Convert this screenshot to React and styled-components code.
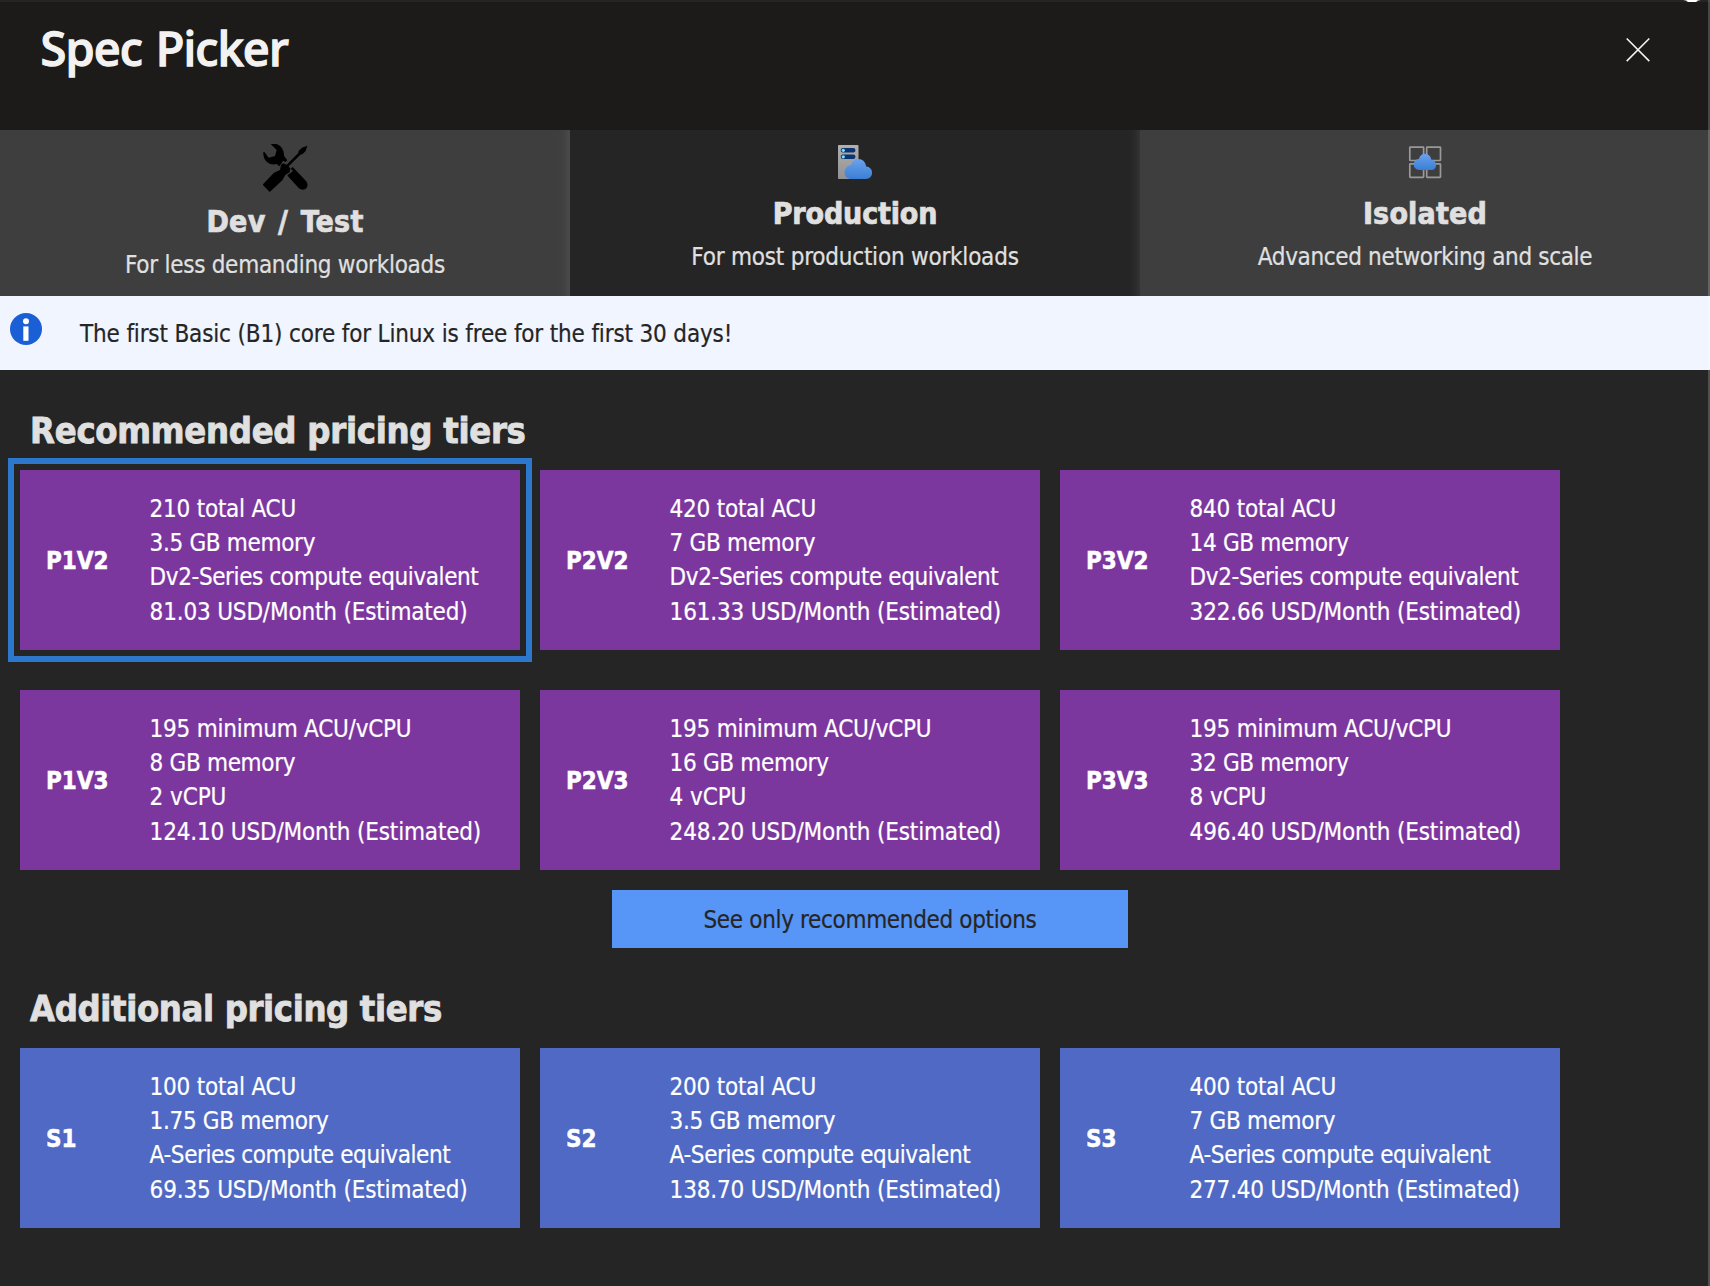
import React from "react";
import styled, { createGlobalStyle } from "styled-components";

const GlobalStyle = createGlobalStyle`
  * { box-sizing: border-box; }
  body {
    margin: 0;
    background: #252525;
    font-family: "DejaVu Sans Condensed", "DejaVu Sans", sans-serif;
    -webkit-text-stroke: 0.2px currentColor;
    overflow: hidden;
  }
  h1, h2, h3, p { margin: 0; }
  button { font: inherit; }
`;

const Blade = styled.div`
  position: relative;
  width: 1710px;
  height: 1286px;
  overflow: hidden;
  background: #252525;

  &::after {
    content: "";
    position: absolute;
    top: 0;
    right: 0;
    width: 2px;
    height: 100%;
    background: rgba(255, 255, 255, 0.2);
  }
`;

const Glint = styled.svg`
  position: absolute;
  top: 0;
  left: 1682px;
`;

const Header = styled.header`
  display: flex;
  justify-content: space-between;
  align-items: flex-start;
  height: 130px;
  padding: 16px 59px 0 40.5px;
  background: #1c1b19;
  border-top: 2px solid #252525;
`;

const BladeTitle = styled.h1`
  font-family: "Noto Sans", "Open Sans", sans-serif;
  font-size: 47px;
  font-weight: 500;
  line-height: 60px;
  letter-spacing: -0.9px;
  word-spacing: 2.5px;
  color: #f3f2f1;
  -webkit-text-stroke: 1.3px #f3f2f1;
`;

const CloseButton = styled.button`
  display: flex;
  margin-top: 19px;
  padding: 0;
  border: 0;
  background: none;
`;

const Tabs = styled.nav`
  display: grid;
  grid-template-columns: repeat(3, 1fr);
  height: 166px;
`;

const Tab = styled.div`
  display: flex;
  flex-direction: column;
  align-items: center;
  padding-top: 14px;
  color: #e0e0e0;
  background: ${(p) => (p.$active ? "#252525" : "#3e3e3e")};

  &:not(:last-child) {
    box-shadow: inset -14px 0 14px -14px rgba(255, 255, 255, 0.14);
  }
`;

const TabIcon = styled.div`
  display: flex;
  align-items: flex-start;
  height: ${(p) => p.$height}px;
  margin-bottom: 12px;
`;

const TabTitle = styled.h3`
  font-size: 30px;
  line-height: 36px;
  letter-spacing: ${(p) => p.$tracking}px;
  word-spacing: 3px;
  -webkit-text-stroke: 0.7px currentColor;
  margin-bottom: 8px;
`;

const TabNote = styled.p`
  font-size: 24px;
  line-height: 34px;
  letter-spacing: ${(p) => p.$tracking}px;
`;

const Banner = styled.div`
  display: flex;
  align-items: center;
  gap: 38px;
  height: 74px;
  padding: 2px 0 0 10px;
  background: #f0f5ff;
  color: #252525;
  font-size: 24px;
  line-height: 34px;
  letter-spacing: -0.16px;
`;

const InfoIcon = styled.svg`
  margin-bottom: 10px;
`;

const Section = styled.section`
  display: flex;
  flex-direction: column;
  padding: 38.5px 0 0 20px;
`;

const SectionTitle = styled.h2`
  padding-left: 10px;
  margin-bottom: 17.5px;
  font-size: 36px;
  line-height: 44px;
  letter-spacing: ${(p) => p.$tracking}px;
  color: #e0e0e0;
  -webkit-text-stroke: 0.8px currentColor;
`;

const TierGrid = styled.div`
  display: grid;
  grid-template-columns: repeat(3, 500px);
  grid-auto-rows: 180px;
  gap: 40px 20px;
`;

const Tier = styled.div`
  display: grid;
  grid-template-columns: 103.6px 1fr;
  align-items: center;
  padding-left: 26px;
  color: #fff;
  background: ${(p) => (p.$standard ? "#4f69c4" : "#7c379f")};
  outline: ${(p) => (p.$selected ? "6px solid #2b78cd" : "none")};
  outline-offset: 6px;
`;

const TierName = styled.div`
  padding-top: 2px;
  font-size: 24px;
  font-weight: 700;
  -webkit-text-stroke: 0.5px currentColor;
`;

const TierSpecs = styled.div`
  display: flex;
  flex-direction: column;
`;

const Spec = styled.div`
  font-size: 24px;
  line-height: 34px;
  letter-spacing: ${(p) => p.$tracking}px;
  white-space: nowrap;

  &:last-child {
    padding-top: 1px;
  }
`;

const ToggleButton = styled.button`
  width: 516px;
  height: 58px;
  margin: 20px 0 0 592px;
  padding: 1px 0 0;
  border: 0;
  background: #5795f7;
  color: #252525;
  font-size: 24px;
  letter-spacing: -0.34px;
`;

const ToolsIcon = () => (
  <svg width="45" height="48" viewBox="489 57 135 144">
    <path d="M512 57C537 52 553 70 552 92L562 106L556 111L549 107L545 115L538 124L530 117C510 123 488 108 490 81L494 82L506 98L525 93L530 75Z" />
    <path d="M622 62L617 78L607 88L601 89L566 124L571 131L569 142L556 150L547 166L509 201L488 179L522 143L540 135L543 120L550 115L560 119L595 84L596 77L606 68Z" />
    <path d="M562 151L571 145L579 137L572 131L578 126L586 134L618 168C631 185 613 203 596 189L566 156Z" />
  </svg>
);

const ServerCloudIcon = () => (
  <svg width="36" height="36" viewBox="0 0 36 36">
    <defs>
      <linearGradient id="chassis" x1="0" y1="0" x2="0" y2="1">
        <stop offset="0" stopColor="#b0b0b0" />
        <stop offset="1" stopColor="#929292" />
      </linearGradient>
      <linearGradient id="cloudA" x1="0" y1="0" x2="0" y2="1">
        <stop offset="0" stopColor="#6ba1ec" />
        <stop offset="1" stopColor="#3a7fd5" />
      </linearGradient>
    </defs>
    <rect x="1" y="1" width="20.5" height="34" rx="0.8" fill="url(#chassis)" />
    <rect x="3.8" y="4" width="14.6" height="4.6" rx="2" fill="#0c3470" />
    <rect x="3.8" y="10.5" width="14.6" height="4.6" rx="2" fill="#0c3470" />
    <circle cx="6.3" cy="6.3" r="1.6" fill="#7be0f5" />
    <circle cx="6.3" cy="12.8" r="1.6" fill="#7be0f5" />
    <path d="M14.5 35C10.5 35 7.6 32.2 7.6 28.2C7.6 24.4 10.4 21.6 14 21C15 17.4 17.9 15.1 21.4 15.1C25.6 15.1 28.6 18.2 29.2 22.6C32.7 22.8 35.1 25.5 35.1 28.8C35.1 32.4 32.4 35 28.8 35Z" fill="url(#cloudA)" />
  </svg>
);

const IsolatedIcon = () => (
  <svg width="36" height="36" viewBox="0 0 36 36">
    <defs>
      <linearGradient id="cloudB" x1="0" y1="0" x2="0" y2="1">
        <stop offset="0" stopColor="#6ba1ec" />
        <stop offset="1" stopColor="#3a7fd5" />
      </linearGradient>
    </defs>
    <g fill="none" stroke="#999" strokeWidth="1.7">
      <rect x="2.8" y="3.1" width="13.8" height="13.4" rx="0.6" />
      <rect x="19.7" y="3.1" width="13.8" height="13.4" rx="0.6" />
      <rect x="2.8" y="19.9" width="13.8" height="13.4" rx="0.6" />
      <rect x="19.7" y="19.9" width="13.8" height="13.4" rx="0.6" />
    </g>
    <path d="M12.4 26C9.1 26 6.7 23.7 6.7 20.6C6.7 17.4 9 15.2 11.8 14.9C12.8 11.6 15.2 9.8 18 9.8C21.4 9.8 23.8 12.3 24.3 15.8C27.1 16 29.1 18.1 29.1 20.9C29.1 23.9 27 26 24 26Z" fill="url(#cloudB)" />
  </svg>
);

const ACU = -0.24;
const MEM = -0.33;
const SERIES = -0.4;
const PRICE = -0.17;

const premium = [
  ["P1V2", ["210 total ACU", ACU], ["3.5 GB memory", MEM], ["Dv2-Series compute equivalent", SERIES], ["81.03 USD/Month (Estimated)", PRICE]],
  ["P2V2", ["420 total ACU", ACU], ["7 GB memory", MEM], ["Dv2-Series compute equivalent", SERIES], ["161.33 USD/Month (Estimated)", PRICE]],
  ["P3V2", ["840 total ACU", ACU], ["14 GB memory", MEM], ["Dv2-Series compute equivalent", SERIES], ["322.66 USD/Month (Estimated)", PRICE]],
  ["P1V3", ["195 minimum ACU/vCPU", ACU], ["8 GB memory", MEM], ["2 vCPU", -0.1], ["124.10 USD/Month (Estimated)", PRICE]],
  ["P2V3", ["195 minimum ACU/vCPU", ACU], ["16 GB memory", MEM], ["4 vCPU", -0.1], ["248.20 USD/Month (Estimated)", PRICE]],
  ["P3V3", ["195 minimum ACU/vCPU", ACU], ["32 GB memory", MEM], ["8 vCPU", -0.1], ["496.40 USD/Month (Estimated)", PRICE]],
];

const standard = [
  ["S1", ["100 total ACU", ACU], ["1.75 GB memory", MEM], ["A-Series compute equivalent", SERIES], ["69.35 USD/Month (Estimated)", PRICE]],
  ["S2", ["200 total ACU", ACU], ["3.5 GB memory", MEM], ["A-Series compute equivalent", SERIES], ["138.70 USD/Month (Estimated)", PRICE]],
  ["S3", ["400 total ACU", ACU], ["7 GB memory", MEM], ["A-Series compute equivalent", SERIES], ["277.40 USD/Month (Estimated)", -0.22]],
];

const Tiers = ({ tiers, isStandard, selected }) => (
  <TierGrid>
    {tiers.map(([name, ...specs]) => (
      <Tier key={name} $standard={isStandard} $selected={name === selected}>
        <TierName>{name}</TierName>
        <TierSpecs>
          {specs.map(([text, tracking]) => (
            <Spec key={text} $tracking={tracking}>{text}</Spec>
          ))}
        </TierSpecs>
      </Tier>
    ))}
  </TierGrid>
);

export default function App() {
  return (
    <>
      <GlobalStyle />
      <Blade>
        <Header>
          <BladeTitle>Spec Picker</BladeTitle>
          <CloseButton aria-label="Close">
            <svg width="26" height="26" viewBox="0 0 26 26">
              <path d="M1.7 1.5L24.3 24.1M24.3 1.5L1.7 24.1" stroke="#f3f2f1" strokeWidth="1.6" />
            </svg>
          </CloseButton>
        </Header>
        <Tabs>
          <Tab>
            <TabIcon $height={48}><ToolsIcon /></TabIcon>
            <TabTitle $tracking={0.25}>Dev / Test</TabTitle>
            <TabNote $tracking={-0.28}>For less demanding workloads</TabNote>
          </Tab>
          <Tab $active>
            <TabIcon $height={40}><ServerCloudIcon /></TabIcon>
            <TabTitle $tracking={-0.15}>Production</TabTitle>
            <TabNote $tracking={-0.22}>For most production workloads</TabNote>
          </Tab>
          <Tab>
            <TabIcon $height={40}><IsolatedIcon /></TabIcon>
            <TabTitle $tracking={0.2}>Isolated</TabTitle>
            <TabNote $tracking={-0.35}>Advanced networking and scale</TabNote>
          </Tab>
        </Tabs>
        <Banner>
          <InfoIcon width="32" height="32" viewBox="0 0 32 32">
            <circle cx="16" cy="16" r="16" fill="#1a5fd6" />
            <circle cx="16" cy="8.2" r="3" fill="#fff" />
            <rect x="13.3" y="13.4" width="5.2" height="14.4" fill="#fff" />
          </InfoIcon>
          <span>The first Basic (B1) core for Linux is free for the first 30 days!</span>
        </Banner>
        <Section>
          <SectionTitle $tracking={-0.27}>Recommended pricing tiers</SectionTitle>
          <Tiers tiers={premium} selected="P1V2" />
          <ToggleButton>See only recommended options</ToggleButton>
        </Section>
        <Section>
          <SectionTitle $tracking={-0.36}>Additional pricing tiers</SectionTitle>
          <Tiers tiers={standard} isStandard />
        </Section>
        <Glint width="20" height="2" viewBox="0 0 20 2">
          <ellipse cx="10" cy="-1" rx="9" ry="3" fill="#fff" opacity="0.5" />
          <ellipse cx="10" cy="-1" rx="6" ry="4" fill="#fff" />
        </Glint>
      </Blade>
    </>
  );
}
